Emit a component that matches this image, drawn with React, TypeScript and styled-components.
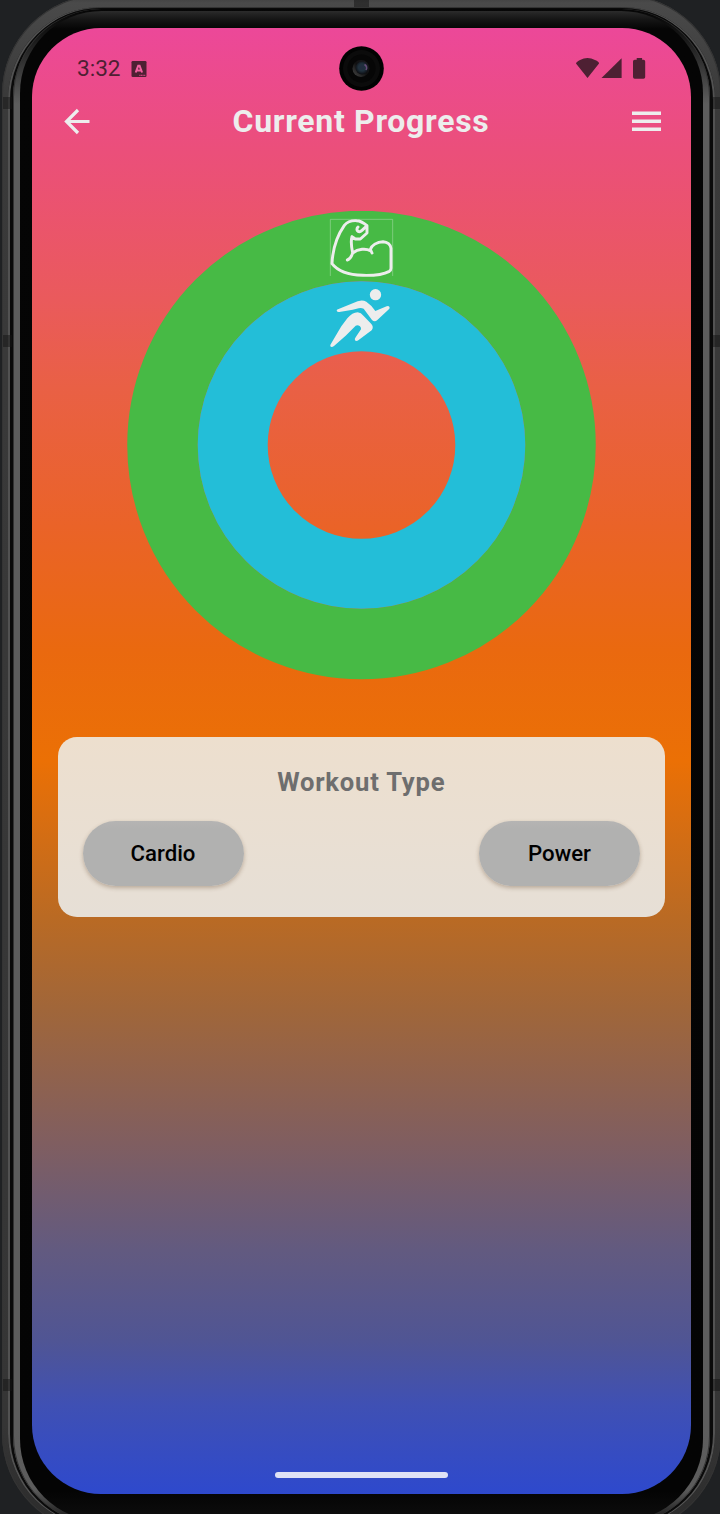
import React from "react";
import styled, { createGlobalStyle } from "styled-components";

const GlobalStyle = createGlobalStyle`
  * { box-sizing: border-box; }
  html, body { margin: 0; padding: 0; background: #1f2123; }
  body { overflow: hidden; font-family: Roboto, "Liberation Sans", sans-serif; }
`;

const Stage = styled.main`
  width: 720px;
  height: 1514px;
  overflow: hidden;
  position: relative;
  background: #1f2123;
`;

const Case = styled.div`
  width: 719px;
  height: 1538px;
  margin: -5px 0 0 2px;
  padding: 12px 6px 6px;
  border-radius: 99px;
  background: linear-gradient(to bottom, #3c3c3c 0, #4a4a4a 8px, #3a3a3a 100px, #353535 1430px, #2b2b2b 100%);
  box-shadow: inset 0 0 0 1px #343434;
`;

const Groove = styled.div`
  height: 100%;
  padding: 2px 5px 3px;
  border-radius: 93px;
  background: #0a0a0a;
  box-shadow: inset 2px 0 0 #525252, inset -2px 0 0 #525252, inset 0 1px 0 #333;
`;

const Rim = styled.div`
  height: 100%;
  padding: 2px 7px 3px;
  border-radius: 88px;
  background: linear-gradient(to bottom, #060606 0, #141414 25px, #5d5d5d 95px, #5d5d5d 1415px, #5c5c5c 1480px, #101010 100%);
  box-shadow: inset 1px 0 0 #333, inset -1px 0 0 #333;
`;

const Bezel = styled.div`
  height: 100%;
  padding: 17px 12px 0;
  border-radius: 82px;
  background: linear-gradient(to bottom, #2b2b2b 0, #161616 8px, #050505 18px, #040404 1480px, #0e0e0e 100%);
`;

const Screen = styled.div`
  position: relative;
  display: flex;
  flex-direction: column;
  width: 659px;
  height: 1466px;
  border-radius: 69px;
  overflow: hidden;
  background: linear-gradient(
    to bottom,
    #ec4899 0%,
    #eb4f7a 8.5%,
    #ea5a5c 18.5%,
    #e96045 24.5%,
    #ea6328 34%,
    #ea690f 42.5%,
    #eb7005 50%,
    #b96a24 60.8%,
    #a0663a 67%,
    #805e60 76%,
    #625a80 83.4%,
    #505594 89.5%,
    #3f50b4 94%,
    #2e49cd 100%
  );
`;

const Seam = styled.span<{ $side: "left" | "right" | "top"; $at: number }>`
  position: absolute;
  background: rgba(20, 20, 20, 0.5);
  ${({ $side, $at }) =>
    $side === "top"
      ? `top: 0; left: ${$at}px; width: 15px; height: 7px;`
      : `${$side}: ${$side === "left" ? 3 : 0}px; top: ${$at}px; width: ${$side === "left" ? 9 : 7}px; height: 12px;`}
`;

const Camera = styled.svg`
  position: absolute;
  left: 307px;
  top: 17.5px;
  width: 45px;
  height: 45px;
`;

const StatusBar = styled.div`
  display: flex;
  align-items: center;
  justify-content: space-between;
  height: 28px;
  margin-top: 27px;
  padding: 0 44px 0 45px;
  color: #4e2033;
`;

const StatusGroup = styled.div`
  display: flex;
  align-items: center;
`;

const Clock = styled.time`
  width: 54px;
  font-size: 22.6px;
  line-height: 28px;
  letter-spacing: 0;
`;

const Header = styled.header`
  display: flex;
  align-items: center;
  justify-content: space-between;
  height: 40px;
  margin-top: 17.5px;
  padding: 0 30px 0 29px;
  color: #ededed;
`;

const IconButton = styled.button`
  display: flex;
  padding: 0;
  border: 0;
  background: none;
  color: inherit;
`;

const Title = styled.h1`
  margin: 0;
  font-size: 32px;
  line-height: 40px;
  font-weight: 700;
  letter-spacing: 0.7px;
`;

const Rings = styled.svg`
  align-self: center;
  flex: none;
  width: 469px;
  height: 469px;
  margin-top: 70.5px;
`;

const Card = styled.section`
  margin: 57px 26px 0 25.5px;
  height: 180px;
  padding: 29px 25px 0;
  border-radius: 19px;
  background: linear-gradient(to bottom, #eddfce, #e6dfd6);
`;

const CardTitle = styled.h2`
  margin: 0;
  font-size: 25.6px;
  line-height: 32px;
  font-weight: 700;
  letter-spacing: 0.8px;
  text-align: center;
  color: #6e6e6e;
`;

const Choices = styled.div`
  display: flex;
  justify-content: space-between;
  margin-top: 23px;
`;

const Choice = styled.button`
  width: 161px;
  height: 65px;
  padding: 0 0 2px;
  border: 0;
  border-radius: 33px;
  background: linear-gradient(to bottom, #b5b4b3, #b1b1b0 12%);
  box-shadow: 0 2px 4px rgba(90, 60, 30, 0.32);
  font-family: inherit;
  font-size: 22.2px;
  font-weight: 500;
  letter-spacing: 0;
  color: #000;
`;

const HomeIndicator = styled.div`
  width: 173px;
  height: 6px;
  margin: auto auto 16px 243px;
  border-radius: 3px;
  background: #dfe2f5;
`;

const StatusIcons = () => (
  <svg width="72" height="24" viewBox="575 57 72 24" fill="currentColor">
    <path d="M576 63.5 Q576 62 580 60 Q587.5 56.2 595 60 Q599.5 62 599 63.5 L587.5 78Z" />
    <path d="M601.5 78 L621.6 58.2V78Z" />
    <path d="M636.7 58h5.4v1.8h1.4q1.7 0 1.7 1.7v15.6q0 1.7-1.7 1.7h-8.8q-1.7 0-1.7-1.7V61.500q0-1.700 1.700-1.700h2z" />
  </svg>
);

const KeyboardBadge = () => (
  <svg width="16" height="17" viewBox="0 0 16 17">
    <rect x="0.500" y="0" width="15" height="16" rx="1.200" fill="currentColor" />
    <path d="M4.700 11.500 7.200 4.800h1.400L11.100 11.500M5.800 9.500h4" fill="none" stroke="#f0609f" strokeWidth="2" />
    <path d="M8.300 14.300h6" stroke="#e94a90" strokeWidth="1.200" strokeDasharray="1.200 .4" opacity=".8" />
  </svg>
);

const Muscle = () => (
  <g transform="translate(310 200) scale(.33333)">
    <path d="M61 228V58H248V228" fill="none" stroke="#a0d99f" strokeWidth="1.800" />
    <path
      d="M126 110 136 117H151L171 99V77Q153 62 140 62C122 61 112 65 103 76C82 106 68 146 66 191C83 213 119 225 158 226C193 227 221 223 238 214Q243 211 243 205V145C242 134 232 126 219 125C201 125 184 137 181 148L186 159M181 152C168 145 145 146 128 159Q122 177 112 180M126 110Q121 126 128 159M168 80 156 91Q147 99 142 92Q139 86 144 81"
      fill="none"
      stroke="#ededed"
      strokeWidth="8.800"
      strokeLinecap="round"
      strokeLinejoin="round"
    />
  </g>
);

const Runner = () => (
  <g transform="translate(310 200) scale(.33333)" fill="#ededed">
    <circle cx="196.500" cy="284" r="17" />
    <path d="M84 328 130 309Q153 296 169 305Q183 314 196 333L230 319Q238 316 239 323Q239 326 235 329L202 360Q194 367 186 360L161 326Q152 322 146 325L128 329 88 336Q82 337 80 332Q80 329 84 328Z" />
    <path d="M112 355Q127 337 143 337Q153 338 161 348L182 370Q193 381 185 391L146 420Q139 425 135 421Q133 417 137 412L153 388Q154 383 150 379Q143 373 137 377L107 407 72 438Q65 443 61 439Q60 435 63 431L94 379Z" />
  </g>
);

export default function App() {
  return (
    <>
      <GlobalStyle />
      <Stage>
        <Case>
          <Groove>
            <Rim>
              <Bezel>
                <Screen>
                  <StatusBar>
                    <StatusGroup>
                      <Clock>3:32</Clock>
                      <KeyboardBadge />
                    </StatusGroup>
                    <StatusIcons />
                  </StatusBar>
                  <Header>
                    <IconButton aria-label="Back">
                      <svg width="30" height="30" viewBox="0 0 30 30" fill="none" stroke="currentColor" strokeWidth="3.200">
                        <path d="M28.500 15.500H5M17 4 5.500 15.500 17 27" />
                      </svg>
                    </IconButton>
                    <Title>Current Progress</Title>
                    <IconButton aria-label="Menu">
                      <svg width="30" height="24" viewBox="0 0 30 24" stroke="currentColor" strokeWidth="3.400">
                        <path d="M1 4.300h29M1 12.300h29M1 20.200h29" />
                      </svg>
                    </IconButton>
                  </Header>
                  <Rings viewBox="127 211 469 469">
                    <circle cx="361.500" cy="445" r="199" fill="none" stroke="#47ba45" strokeWidth="70.500" />
                    <circle cx="361.500" cy="445" r="128.800" fill="none" stroke="#23bed8" strokeWidth="70" />
                    <Muscle />
                    <Runner />
                  </Rings>
                  <Card>
                    <CardTitle>Workout Type</CardTitle>
                    <Choices>
                      <Choice>Cardio</Choice>
                      <Choice>Power</Choice>
                    </Choices>
                  </Card>
                  <HomeIndicator />
                  <Camera viewBox="0 0 45 45">
                    <defs>
                      <radialGradient id="lens" cx=".5" cy=".45" r=".55">
                        <stop offset="0" stopColor="#222b40" />
                        <stop offset=".5" stopColor="#20303c" />
                        <stop offset="1" stopColor="#0c0c10" />
                      </radialGradient>
                      <linearGradient id="glare" x1="0" y1="1" x2="1" y2="0">
                        <stop offset="0" stopColor="#4a4a4a" />
                        <stop offset=".5" stopColor="#101010" />
                        <stop offset="1" stopColor="#1d1a20" />
                      </linearGradient>
                    </defs>
                    <circle cx="22.500" cy="22.500" r="22.300" fill="#020202" />
                    <circle cx="22.500" cy="22.500" r="18.500" fill="#0b0b0b" />
                    <circle cx="22.500" cy="22.500" r="14" fill="#060606" />
                    <circle cx="22" cy="22.500" r="8.500" fill="url(#glare)" />
                    <circle cx="23" cy="22" r="6.500" fill="url(#lens)" />
                    <path d="M25.500 18.500q3.500 2 1.500 5.500" stroke="#78558a" strokeWidth="1.500" fill="none" opacity=".8" />
                  </Camera>
                </Screen>
              </Bezel>
            </Rim>
          </Groove>
        </Case>
        <Seam $side="top" $at={354} />
        <Seam $side="left" $at={97} />
        <Seam $side="right" $at={97} />
        <Seam $side="left" $at={335} />
        <Seam $side="right" $at={335} />
        <Seam $side="left" $at={1379} />
        <Seam $side="right" $at={1379} />
      </Stage>
    </>
  );
}
